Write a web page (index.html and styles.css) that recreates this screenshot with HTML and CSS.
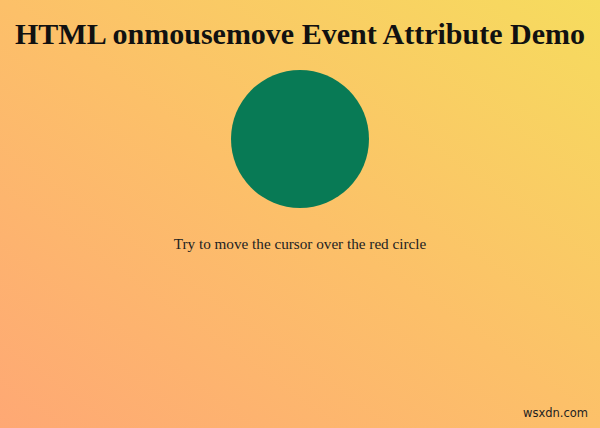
FILE: index.html
```html
<!DOCTYPE html>
<html>
<head>
<meta charset="utf-8">
<link rel="stylesheet" href="styles.css">
</head>
<body>
<div class="page">
  <h1 class="title">HTML onmousemove Event Attribute Demo</h1>
  <div class="circle"></div>
  <p class="hint">Try to move the cursor over the red circle</p>
  <div class="spacer"></div>
  <div class="mark">wsxdn.com</div>
</div>
</body>
</html>
```
FILE: styles.css
```css
html, body {
  margin: 0;
  padding: 0;
  width: 600px;
  height: 428px;
  overflow: hidden;
}
body {
  background: linear-gradient(to top right, #fea874 0%, #fcc069 50%, #f6dc5e 100%);
  font-family: "Liberation Serif", "Times New Roman", serif;
  color: #111;
}
.page {
  height: 428px;
  display: flex;
  flex-direction: column;
  align-items: center;
}
.title {
  margin: 18px 0 0 0;
  font-size: 30px;
  line-height: 32px;
  font-weight: bold;
  color: #111;
}
.circle {
  margin-top: 20px;
  width: 138px;
  height: 138px;
  border-radius: 50%;
  background: #087a55;
}
.hint {
  margin: 27px 0 0 0;
  font-size: 15.2px;
  line-height: 18px;
  color: #222;
}
.spacer {
  flex: 1;
}
.mark {
  align-self: flex-end;
  margin: 0 12px 8px 0;
  font-family: "DejaVu Sans", Verdana, sans-serif;
  font-size: 11.5px;
  color: #222;
}
```
